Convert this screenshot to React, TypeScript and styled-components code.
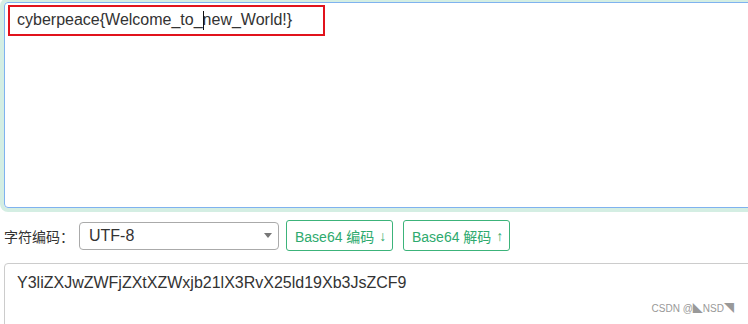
import React from 'react';
import styled, { createGlobalStyle } from 'styled-components';

const GlobalStyle = createGlobalStyle`
  html, body {
    margin: 0;
    padding: 0;
    background: #fff;
    font-family: "Liberation Sans", Arial, "Noto Sans CJK SC", sans-serif;
    color: #333;
  }
`;

export default function App() {
  return (
    <Page>
      <GlobalStyle />
      <InputBox>
        <Content>
          cyberpeace{'{'}Welcome_to_<Caret>n</Caret>ew_World!{'}'}
        </Content>
        <Highlight />
      </InputBox>

      <Toolbar>
        <Label>字符编码：</Label>
        <Select>
          <span>UTF-8</span>
          <Arrow />
        </Select>
        <ActionButton>
          Base64 编码 <span>↓</span>
        </ActionButton>
        <ActionButton>
          Base64 解码 <span>↑</span>
        </ActionButton>
      </Toolbar>

      <OutputBox>
        <Content>Y3liZXJwZWFjZXtXZWxjb21lX3RvX25ld19Xb3JsZCF9</Content>
      </OutputBox>
      <Watermark>CSDN @◣NSD◥</Watermark>
    </Page>
  );
}

const Page = styled.div`
  position: relative;
  width: 748px;
  height: 324px;
  overflow: hidden;
  padding: 2px 0 0 4px;
  box-sizing: border-box;
`;

const InputBox = styled.div`
  position: relative;
  width: 790px;
  height: 206px;
  box-sizing: border-box;
  border: 1px solid #7fb2ef;
  border-radius: 4px;
  box-shadow: 0 0 0 4px #d4eee3;
  padding: 7px 12px;
`;

const Content = styled.div`
  font-size: 16px;
  line-height: 20px;
  color: #333;
`;

const Caret = styled.span`
  position: relative;

  &::before {
    content: '';
    position: absolute;
    left: 0;
    top: 0;
    width: 1px;
    height: 19px;
    background: #111;
  }
`;

const Highlight = styled.div`
  position: absolute;
  left: 3px;
  top: 2px;
  width: 317px;
  height: 31px;
  box-sizing: border-box;
  border: 2px solid #e1131c;
`;

const Toolbar = styled.div`
  display: flex;
  align-items: center;
  margin-top: 12px;
  height: 31px;
`;

const Label = styled.span`
  font-size: 14px;
  color: #333;
  margin-right: 5px;
`;

const Select = styled.div`
  display: flex;
  align-items: center;
  justify-content: space-between;
  width: 200px;
  height: 28px;
  box-sizing: border-box;
  border: 1px solid #aaa;
  border-radius: 4px;
  padding: 0 6px 0 9px;
  font-size: 16px;
  color: #333;
`;

const Arrow = styled.span`
  width: 0;
  height: 0;
  border-left: 4px solid transparent;
  border-right: 4px solid transparent;
  border-top: 5px solid #777;
`;

const ActionButton = styled.div`
  display: flex;
  align-items: center;
  width: 107px;
  height: 31px;
  box-sizing: border-box;
  margin-left: 7px;
  padding: 0 0 0 8px;
  border: 1px solid #3cb37a;
  border-radius: 3px;
  font-size: 14px;
  color: #2eaa6e;
  white-space: pre;
  overflow: hidden;

  & + & {
    margin-left: 10px;
  }

  span {
    margin-left: 1px;
    font-size: 14px;
  }
`;

const OutputBox = styled.div`
  margin-top: 12px;
  width: 790px;
  height: 80px;
  box-sizing: border-box;
  border: 1px solid #ccc;
  border-radius: 4px;
  padding: 9px 12px;
`;

const Watermark = styled.div`
  position: absolute;
  right: 14px;
  bottom: 9px;
  font-size: 10px;
  color: #999;
`;
